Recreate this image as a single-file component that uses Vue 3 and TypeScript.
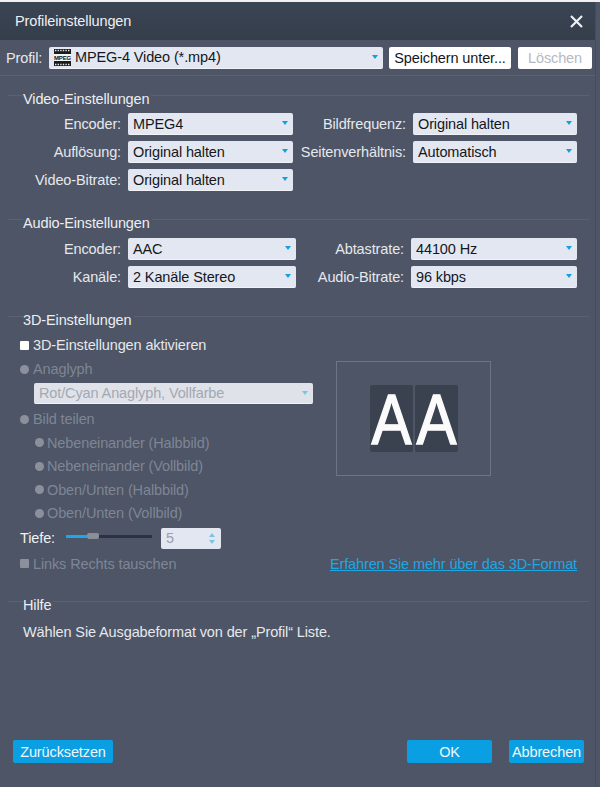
<template>
  <div class="window">
    <header class="title-bar">
      <span class="title">Profileinstellungen</span>
      <svg class="close" width="13" height="13" viewBox="0 0 13 13" aria-label="Schließen">
        <path d="M1 1 12 12M12 1 1 12" stroke="#eef0f3" stroke-width="2.2" fill="none" />
      </svg>
    </header>

    <div class="profile-row">
      <span class="profile-label">Profil:</span>
      <div class="select profile-select">
        <svg class="mpeg-icon" width="17" height="17" viewBox="0 0 17 17" aria-hidden="true">
          <rect width="17" height="17" fill="#1b1b1b" />
          <path d="M1 1.5h15M1 15.5h15" stroke="#e8e8e8" stroke-width="1.4" stroke-dasharray="1.4 1.2" />
          <rect y="5" width="17" height="7" fill="#f4f4f4" />
          <text x="8.5" y="11" text-anchor="middle" font-size="6" font-weight="700" class="mpeg-text">MPEG</text>
        </svg>
        <span>MPEG-4 Video (*.mp4)</span>
        <i class="arrow"></i>
      </div>
      <button class="plain-btn save-btn">Speichern unter...</button>
      <button class="plain-btn delete-btn">Löschen</button>
    </div>

    <section class="section video">
      <h3 class="section-head"><span>Video-Einstellungen</span></h3>
      <div class="form-grid">
        <template v-for="row in videoRows" :key="row.label">
          <span class="label">{{ row.label }}</span>
          <div class="select"><span>{{ row.value }}</span><i class="arrow"></i></div>
        </template>
      </div>
    </section>

    <section class="section audio">
      <h3 class="section-head"><span>Audio-Einstellungen</span></h3>
      <div class="form-grid">
        <template v-for="row in audioRows" :key="row.label">
          <span class="label">{{ row.label }}</span>
          <div class="select"><span>{{ row.value }}</span><i class="arrow"></i></div>
        </template>
      </div>
    </section>

    <section class="section three-d">
      <h3 class="section-head"><span>3D-Einstellungen</span></h3>
      <div class="three-d-body">
        <div class="three-d-left">
          <div class="opt"><i class="check"></i>3D-Einstellungen aktivieren</div>
          <div class="opt off"><i class="radio"></i>Anaglyph</div>
          <div class="select disabled anaglyph-select">
            <span>Rot/Cyan Anaglyph, Vollfarbe</span><i class="arrow"></i>
          </div>
          <div class="opt off split"><i class="radio"></i>Bild teilen</div>
          <div v-for="item in splitModes" :key="item" class="opt off sub">
            <i class="radio"></i>{{ item }}
          </div>
          <div class="depth-row">
            <span class="depth-label">Tiefe:</span>
            <div class="slider">
              <div class="slider-fill" :style="{ width: depthFill + 'px' }"></div>
              <div class="slider-thumb" :style="{ left: depthFill + 'px' }"></div>
            </div>
            <div class="spin">
              <span>5</span>
              <div class="spin-arrows"><i class="up"></i><i class="down"></i></div>
            </div>
          </div>
        </div>
        <div class="preview">
          <div class="tile"><svg width="43" height="67" viewBox="0 0 43 57" preserveAspectRatio="none"><text x="21.5" y="50" text-anchor="middle" class="tile-a">A</text></svg></div>
          <div class="tile"><svg width="43" height="67" viewBox="0 0 43 57" preserveAspectRatio="none"><text x="21.5" y="50" text-anchor="middle" class="tile-a">A</text></svg></div>
        </div>
      </div>
      <div class="swap-row">
        <div class="opt off"><i class="check"></i>Links Rechts tauschen</div>
        <a class="more-link" href="#">Erfahren Sie mehr über das 3D-Format</a>
      </div>
    </section>

    <section class="section help">
      <h3 class="section-head"><span>Hilfe</span></h3>
      <p class="help-text">Wählen Sie Ausgabeformat von der „Profil“ Liste.</p>
    </section>

    <footer class="footer">
      <button class="blue-btn reset-btn">Zurücksetzen</button>
      <div class="footer-right">
        <button class="blue-btn ok-btn">OK</button>
        <button class="blue-btn cancel-btn">Abbrechen</button>
      </div>
    </footer>
  </div>
</template>

<script setup lang="ts">
interface FormRow {
  label: string;
  value: string;
}

const videoRows: FormRow[] = [
  { label: 'Encoder:', value: 'MPEG4' },
  { label: 'Bildfrequenz:', value: 'Original halten' },
  { label: 'Auflösung:', value: 'Original halten' },
  { label: 'Seitenverhältnis:', value: 'Automatisch' },
  { label: 'Video-Bitrate:', value: 'Original halten' },
];

const audioRows: FormRow[] = [
  { label: 'Encoder:', value: 'AAC' },
  { label: 'Abtastrate:', value: '44100 Hz' },
  { label: 'Kanäle:', value: '2 Kanäle Stereo' },
  { label: 'Audio-Bitrate:', value: '96 kbps' },
];

const splitModes = [
  'Nebeneinander (Halbbild)',
  'Nebeneinander (Vollbild)',
  'Oben/Unten (Halbbild)',
  'Oben/Unten (Vollbild)',
];

const depthFill = 21;
</script>

<style>
html,
body {
  margin: 0;
  min-height: 787px;
  background: linear-gradient(#f4eef1 2px, #4d5566 2px);
}
</style>

<style scoped>
.window {
  box-sizing: border-box;
  width: 596px;
  height: 785px;
  margin-top: 2px;
  display: flex;
  flex-direction: column;
  background: #4d5566;
  border-right: 1px solid #454d5c;
  color: #e6e8ec;
  font-family: "Liberation Sans", Arial, sans-serif;
  font-size: 14.5px;
  letter-spacing: -0.12px;
  line-height: 20px;
}

.title-bar {
  flex: none;
  height: 38px;
  display: flex;
  align-items: center;
  justify-content: space-between;
  padding: 0 12px 0 15px;
  background: linear-gradient(#3b4453, #353e4b);
}

.title {
  color: #eef0f3;
}

.profile-row {
  flex: none;
  display: flex;
  align-items: center;
  height: 21px;
  padding: 7px 3px 7px 6px;
  border-bottom: 1px solid #596173;
}

.profile-label {
  width: 43px;
  white-space: nowrap;
}

.profile-select {
  width: 334px;
}

.mpeg-icon {
  margin-right: 4px;
  flex: none;
}

.mpeg-text {
  font-family: "Liberation Sans", sans-serif;
  fill: #111;
}

.select {
  position: relative;
  box-sizing: border-box;
  display: flex;
  align-items: center;
  height: 22px;
  padding-left: 5px;
  background: #e3e7f1;
  border-radius: 2px;
  border-bottom: 1px solid #f1f3f8;
  color: #15171b;
}

.arrow {
  position: absolute;
  right: 5px;
  top: 8px;
  width: 0;
  height: 0;
  border-left: 3.5px solid transparent;
  border-right: 3.5px solid transparent;
  border-top: 4px solid #12a0e3;
}

.plain-btn {
  box-sizing: border-box;
  height: 22px;
  padding: 0;
  border: 0;
  border-radius: 2px;
  background: #fff;
  font: inherit;
  letter-spacing: inherit;
  color: #15171b;
}

.save-btn {
  width: 122px;
  margin-left: 6px;
}

.delete-btn {
  width: 74px;
  margin-left: 7px;
  color: #b6b9c1;
}

.section-head {
  display: flex;
  height: 18px;
  margin: 0;
  font: inherit;
  padding-left: 8px;
}

.section-head span {
  line-height: 20px;
  margin-top: -6px;
  color: #eceef1;
}

.section-head::before,
.section-head::after {
  content: "";
  height: 0;
  border-top: 1px solid #596173;
}

.section-head::before {
  width: 15px;
}

.section-head::after {
  flex: 1;
  margin: 0 6px 0 2px;
}

.section.video {
  margin-top: 19px;
}

.section.audio {
  margin-top: 28px;
}

.section.audio .section-head {
  height: 19px;
}

.section.three-d {
  margin-top: 28px;
}

.section.help {
  margin-top: 25px;
}

.form-grid {
  display: grid;
  column-gap: 7px;
  row-gap: 6px;
  grid-auto-rows: 22px;
  padding-left: 8px;
  align-items: center;
}

.video .form-grid {
  grid-template-columns: 113px 165px 106px 164px;
}

.audio .form-grid {
  grid-template-columns: 113px 168px 101px 166px;
}

.label {
  text-align: right;
  white-space: nowrap;
}

.three-d-body {
  display: flex;
  padding-left: 20px;
  margin-top: -1px;
}

.three-d-left {
  width: 293px;
}

.opt {
  display: flex;
  align-items: center;
  height: 24px;
  white-space: nowrap;
}

.opt.off {
  color: #7f8695;
}

.opt.split {
  margin-top: 3px;
}

.opt.sub {
  height: 23.5px;
  padding-left: 15px;
}

.check {
  width: 9px;
  height: 9px;
  margin-right: 4px;
  background: #fff;
  border-radius: 1px;
}

.off .check,
.radio {
  background: #8b909c;
}

.radio {
  width: 9px;
  height: 9px;
  margin-right: 4px;
  border-radius: 50%;
}

.sub .radio {
  margin-right: 3px;
}

.anaglyph-select {
  height: 21px;
  margin: 2px 0 0 14px;
  color: #a4a8b2;
  background: #dfe2e9;
}

.anaglyph-select .arrow {
  border-top-color: #7cc4e6;
}

.depth-row {
  display: flex;
  align-items: center;
  height: 21px;
  margin-top: 2.5px;
}

.depth-label {
  width: 46px;
  color: #f0f1f4;
}

.slider {
  position: relative;
  width: 86px;
  height: 3px;
  margin-bottom: 3px;
  background: #2a3140;
}

.slider-fill {
  height: 3px;
  background: #18a8ee;
}

.slider-thumb {
  position: absolute;
  top: -2px;
  width: 12px;
  height: 6px;
  border-radius: 2px;
  background: #8a8f99;
}

.spin {
  box-sizing: border-box;
  display: flex;
  align-items: center;
  justify-content: space-between;
  width: 60px;
  height: 21px;
  margin-left: 9px;
  padding: 0 6px 0 5px;
  border-radius: 2px;
  background: #e3e7f1;
  color: #9b9fa9;
}

.spin-arrows {
  display: flex;
  flex-direction: column;
  gap: 3px;
}

.spin-arrows i {
  width: 0;
  height: 0;
  border-left: 3px solid transparent;
  border-right: 3px solid transparent;
}

.spin-arrows .up {
  border-bottom: 4px solid #7cc4e6;
}

.spin-arrows .down {
  border-top: 4px solid #7cc4e6;
}

.preview {
  box-sizing: border-box;
  display: flex;
  align-items: center;
  justify-content: center;
  gap: 2px;
  width: 155px;
  height: 115px;
  margin: 28px 0 0 23px;
  border: 1px solid #6d7585;
}

.tile {
  width: 43px;
  height: 67px;
  border-radius: 2px;
  background: #3a4250;
}

.tile svg {
  display: block;
  overflow: visible;
}

.tile-a {
  font-family: "Liberation Sans", sans-serif;
  font-size: 60px;
  letter-spacing: 0;
  fill: #fbfbfb;
  stroke: #fbfbfb;
  stroke-width: 1.2px;
}

.swap-row {
  display: flex;
  align-items: center;
  justify-content: space-between;
  height: 24px;
  margin-top: 3px;
  padding: 0 18px 0 20px;
}

.more-link {
  color: #1fa7e4;
  text-decoration: underline;
}

.help-text {
  margin: 3px 0 0 23px;
}

.footer {
  display: flex;
  justify-content: space-between;
  margin-top: auto;
  padding: 0 11px 24px 13px;
}

.footer-right {
  display: flex;
  gap: 17px;
}

.blue-btn {
  box-sizing: border-box;
  height: 23px;
  padding: 0;
  border: 0;
  border-radius: 2px;
  background: #0a9fe2;
  color: #f2f6f9;
  font: inherit;
  letter-spacing: inherit;
}

.reset-btn {
  width: 100px;
}

.ok-btn {
  width: 85px;
}

.cancel-btn {
  width: 75px;
}
</style>
